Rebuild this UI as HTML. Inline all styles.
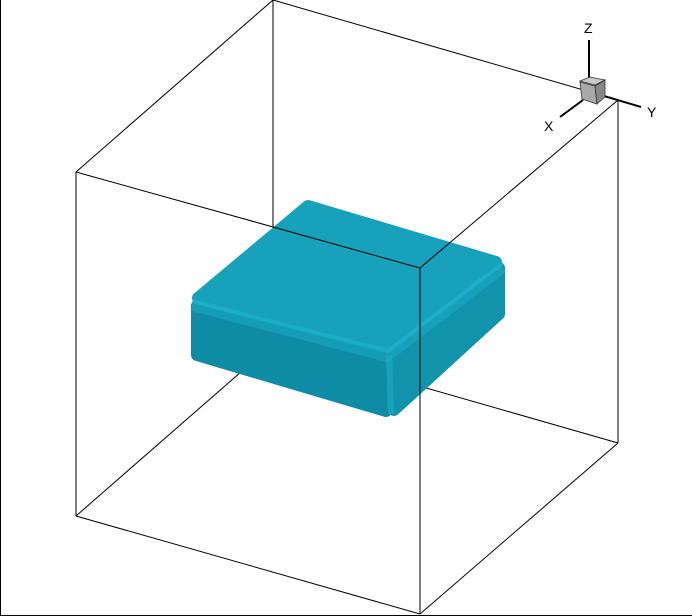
<!DOCTYPE html>
<html><head><style>html,body{margin:0;padding:0;background:#fff;}svg{display:block}</style></head>
<body>
<svg width="692" height="616" viewBox="0 0 692 616" xmlns="http://www.w3.org/2000/svg">
<rect width="692" height="616" fill="#fff"/>
<g stroke="#000" stroke-width="1" fill="none">
<line x1="273" y1="0" x2="273" y2="344"/>
<line x1="273" y1="344" x2="618" y2="443"/>
<line x1="76" y1="516" x2="273" y2="344"/>
<line x1="273" y1="0" x2="618" y2="100"/>
</g>
<g stroke-linejoin="round" stroke-width="12">
<polygon points="197,306 384,356 386,411 197,355" fill="#0e8ca5" stroke="#0e8ca5"/>
<polygon points="392,356 499,268 499,314 394,410" fill="#1293ac" stroke="#1293ac"/>
<polygon points="308,206 496,262 388,345 198,298" fill="#18a1ba" stroke="#18a1ba"/>
</g>
<path d="M192,306 L387,357 L503,268" stroke="#1ca9c2" stroke-width="10" fill="none" stroke-linejoin="round" opacity="0.6"/>
<path d="M192,301 L388,351 L503,263" stroke="#22b6cf" stroke-width="4" fill="none" stroke-linejoin="round" opacity="0.6"/>
<path d="M389,356 L391,414" stroke="#1fb0c9" stroke-width="6" fill="none" opacity="0.5"/>
<g stroke="#000" stroke-width="1" fill="none">
<line x1="76" y1="172" x2="273" y2="0"/>
<line x1="76" y1="172" x2="420" y2="268"/>
<line x1="420" y1="268" x2="618" y2="100"/>
<line x1="76" y1="172" x2="76" y2="516"/>
<line x1="76" y1="516" x2="420" y2="614"/>
<line x1="420" y1="268" x2="420" y2="614"/>
<line x1="618" y1="100" x2="618" y2="443"/>
<line x1="420" y1="614" x2="618" y2="443"/>
<line x1="0.5" y1="0" x2="0.5" y2="616"/>
<line x1="0" y1="615.5" x2="692" y2="615.5"/>
</g>
<g stroke="#000" stroke-width="2">
<line x1="589" y1="40" x2="589" y2="78"/>
<line x1="604" y1="96" x2="641" y2="107"/>
<line x1="583" y1="100" x2="560" y2="117"/>
</g>
<polygon points="580,81 590,77 605,80 595,85" fill="#c8c8c8" stroke="#333" stroke-width="0.8"/>
<polygon points="580,82 595,86 597,104 582,99" fill="#a8a8a8" stroke="#333" stroke-width="0.8"/>
<polygon points="595,86 605,80 605,97 597,104" fill="#888" stroke="#333" stroke-width="0.8"/>
<g font-family="Liberation Sans, sans-serif" font-size="14" fill="#000">
<text x="584" y="33">Z</text>
<text x="647" y="117">Y</text>
<text x="544" y="131">X</text>
</g>
</svg>
</body></html>
